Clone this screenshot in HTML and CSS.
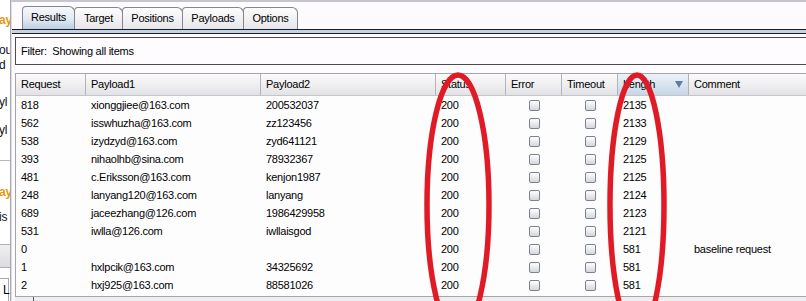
FILE: index.html
```html
<!DOCTYPE html>
<html>
<head>
<meta charset="utf-8">
<title>Intruder results</title>
<link rel="stylesheet" href="styles.css">
</head>
<body>
<div class="app">
  <aside class="side">
    <div class="frag orange s1">ay</div>
    <div class="frag s2">ou</div>
    <div class="frag s3">d</div>
    <div class="frag s4">yl</div>
    <div class="frag s5">yl</div>
    <div class="rule s6"></div>
    <div class="frag orange s7">ay</div>
    <div class="frag s8">is</div>
    <div class="sidebtn"></div>
    <div class="sidebox">L</div>
  </aside>
  <main class="main">
    <div class="tabs">
      <div class="tab active w-results">Results</div>
      <div class="tab w-target">Target</div>
      <div class="tab w-positions">Positions</div>
      <div class="tab w-payloads">Payloads</div>
      <div class="tab w-options">Options</div>
    </div>
    <div class="strip"></div>
    <div class="filter">Filter:&nbsp; Showing all items</div>
    <div class="table">
      <div class="grid thead">
        <div class="th">Request</div>
        <div class="th">Payload1</div>
        <div class="th">Payload2</div>
        <div class="th">Status</div>
        <div class="th">Error</div>
        <div class="th">Timeout</div>
        <div class="th sorted"><span>Length</span><svg class="sort" width="8" height="7" viewBox="0 0 8 7"><polygon points="0,0 8,0 4,7" fill="#5b7ea8"/></svg></div>
        <div class="th last">Comment</div>
      </div>
      <div class="grid row"><div class="td">818</div><div class="td">xionggjiee@163.com</div><div class="td">200532037</div><div class="td">200</div><div class="td c"><i class="cb"></i></div><div class="td c"><i class="cb"></i></div><div class="td">2135</div><div class="td"></div></div>
      <div class="grid row"><div class="td">562</div><div class="td">isswhuzha@163.com</div><div class="td">zz123456</div><div class="td">200</div><div class="td c"><i class="cb"></i></div><div class="td c"><i class="cb"></i></div><div class="td">2133</div><div class="td"></div></div>
      <div class="grid row"><div class="td">538</div><div class="td">izydzyd@163.com</div><div class="td">zyd641121</div><div class="td">200</div><div class="td c"><i class="cb"></i></div><div class="td c"><i class="cb"></i></div><div class="td">2129</div><div class="td"></div></div>
      <div class="grid row"><div class="td">393</div><div class="td">nihaolhb@sina.com</div><div class="td">78932367</div><div class="td">200</div><div class="td c"><i class="cb"></i></div><div class="td c"><i class="cb"></i></div><div class="td">2125</div><div class="td"></div></div>
      <div class="grid row"><div class="td">481</div><div class="td">c.Eriksson@163.com</div><div class="td">kenjon1987</div><div class="td">200</div><div class="td c"><i class="cb"></i></div><div class="td c"><i class="cb"></i></div><div class="td">2125</div><div class="td"></div></div>
      <div class="grid row"><div class="td">248</div><div class="td">lanyang120@163.com</div><div class="td">lanyang</div><div class="td">200</div><div class="td c"><i class="cb"></i></div><div class="td c"><i class="cb"></i></div><div class="td">2124</div><div class="td"></div></div>
      <div class="grid row"><div class="td">689</div><div class="td">jaceezhang@126.com</div><div class="td">1986429958</div><div class="td">200</div><div class="td c"><i class="cb"></i></div><div class="td c"><i class="cb"></i></div><div class="td">2123</div><div class="td"></div></div>
      <div class="grid row"><div class="td">531</div><div class="td">iwlla@126.com</div><div class="td">iwllaisgod</div><div class="td">200</div><div class="td c"><i class="cb"></i></div><div class="td c"><i class="cb"></i></div><div class="td">2121</div><div class="td"></div></div>
      <div class="grid row"><div class="td">0</div><div class="td"></div><div class="td"></div><div class="td">200</div><div class="td c"><i class="cb"></i></div><div class="td c"><i class="cb"></i></div><div class="td">581</div><div class="td">baseline request</div></div>
      <div class="grid row"><div class="td">1</div><div class="td">hxlpcik@163.com</div><div class="td">34325692</div><div class="td">200</div><div class="td c"><i class="cb"></i></div><div class="td c"><i class="cb"></i></div><div class="td">581</div><div class="td"></div></div>
      <div class="grid row"><div class="td">2</div><div class="td">hxj925@163.com</div><div class="td">88581026</div><div class="td">200</div><div class="td c"><i class="cb"></i></div><div class="td c"><i class="cb"></i></div><div class="td">581</div><div class="td"></div></div>
    </div>
    <div class="hscroll"><span class="hthumb"></span></div>
  </main>
</div>
<svg class="marks" width="806" height="301" viewBox="0 0 806 301">
  <ellipse cx="458" cy="205" rx="31" ry="130" fill="none" stroke="#e01b25" stroke-width="5.5"/>
  <ellipse cx="637" cy="205" rx="27" ry="130" fill="none" stroke="#e01b25" stroke-width="5.5"/>
</svg>
</body>
</html>
```
FILE: styles.css
```css
* { box-sizing: border-box; margin: 0; padding: 0; }
html, body { width: 806px; height: 301px; overflow: hidden; }
body {
  background: #fdfbfd;
  font-family: "Liberation Sans", Arial, sans-serif;
  font-size: 11px;
  letter-spacing: -0.25px;
  color: #000;
  position: relative;
}
.app { display: flex; height: 301px; }

/* left cut-off panel */
.side {
  width: 11px; flex: none;
  background: #fff;
  border-right: 1px solid #a9a9ad;
  overflow: hidden;
  display: flex; flex-direction: column;
}
.frag { height: 14px; line-height: 14px; white-space: nowrap; font-size: 12px; margin-left: -1px; color: #111; }
.orange { color: #e39a12; font-weight: bold; }
.s1 { margin-top: 13px; }
.s2 { margin-top: 16px; }
.s3 { margin-top: 1px; }
.s4 { margin-top: 23px; }
.s5 { margin-top: 14px; }
.rule { height: 1px; background: #b8b8bc; margin-top: 23px; }
.s7 { margin-top: 24px; }
.s8 { margin-top: 11px; }
.sidebtn { margin-top: 20px; height: 27px; background: linear-gradient(#f0f0f2, #dcdce0); border-top: 1px solid #b0b0b4; border-bottom: 1px solid #b0b0b4; }
.sidebox { margin-top: 10px; flex: 1; border-top: 1px solid #a8a8ac; border-right: 1px solid #a8a8ac; width: 9px; padding-left: 3px; line-height: 22px; font-size: 12px; }

/* main panel */
.main {
  flex: 1; min-width: 0;
  border-left: 1px solid #dedee2;
  border-top: 2px solid #c5c5cd;
  display: flex; flex-direction: column;
}
.tabs { display: flex; align-items: flex-end; height: 27px; padding-left: 10px; }
.tab {
  height: 22px; line-height: 21px; text-align: center;
  border: 1px solid #85858d; border-bottom: none;
  border-radius: 4px 6px 0 0;
  background: linear-gradient(#fdfdfd, #e7e7eb);
  margin-left: -1px;
}
.tab.active { height: 23px; margin-left: 0; background: linear-gradient(#f6f8fb 0%, #e2eaf2 55%, #bccfe2 100%); position: relative; z-index: 1; }
.w-results { width: 53px; }
.w-target { width: 49px; }
.w-positions { width: 61px; }
.w-payloads { width: 62px; }
.w-options { width: 55px; }
.strip { height: 5px; border-top: 1px solid #1c1c2a; border-bottom: 1px solid #1c1c2a; background: #c3d3e3; }

.filter {
  margin: 3px 0 0 3px; height: 28px;
  border: 1px solid #4c4c50; border-right: none;
  background: #fefcfe;
  padding-left: 5px; line-height: 26px;
}

.table {
  margin: 8px 0 0 3px; height: 224px; flex: none;
  border-top: 1px solid #a4a4aa; border-left: 1px solid #a4a4aa; border-bottom: 1px solid #a4a4aa;
  background: #fefdfe;
}
.grid { display: grid; grid-template-columns: 70px 175px 175px 70px 56px 56px 71px 1fr; }
.thead { height: 22px; border-bottom: 1px solid #c4c4ca; background: linear-gradient(#fbfbfc, #e3e3e7); }
.th { border-right: 1px solid #b3b3bb; padding-left: 5px; line-height: 21px; white-space: nowrap; }
.th.last { border-right: none; }
.th.sorted { background: linear-gradient(#edf2f7, #c6d6e7); display: flex; align-items: center; justify-content: space-between; padding-right: 5px; }
.sort { display: block; }
.row { height: 18px; line-height: 18px; }
.td { padding-left: 5px; white-space: nowrap; overflow: hidden; }
.td.c { padding-left: 0; display: flex; align-items: center; justify-content: center; }
.cb {
  display: block; width: 11px; height: 11px;
  border: 1px solid #7b838f; border-radius: 2px;
  background: linear-gradient(#ffffff, #d5d6dc);
}

.hscroll { flex: 1; margin-left: 3px; background: #eeeef0; position: relative; }
.hthumb { display: block; width: 1px; height: 100%; margin-left: 18px; background: #555; }

/* hand-drawn red annotation ellipses */
.marks { position: absolute; left: 0; top: 0; pointer-events: none; }
```
